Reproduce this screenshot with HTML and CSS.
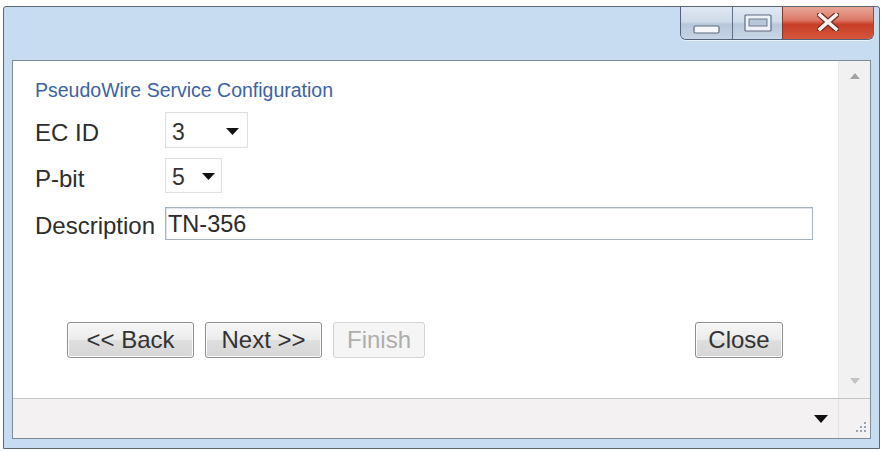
FILE: index.html
```html
<!DOCTYPE html>
<html>
<head>
<meta charset="utf-8">
<link rel="stylesheet" href="styles.css">
</head>
<body>
<div class="window">
  <div class="titlebar">
    <div class="caption-buttons">
      <div class="cb cb-min">
        <svg width="27" height="9" viewBox="0 0 27 9"><rect x="1" y="1" width="25" height="7" rx="1.5" fill="#f4f7fb" stroke="#5d6b7d" stroke-width="1.2"/></svg>
      </div>
      <div class="cb cb-max">
        <svg width="28" height="18" viewBox="0 0 28 18"><rect x="1" y="1" width="26" height="16" rx="1" fill="#eef3f9" stroke="#5d6b7d" stroke-width="1.2"/><rect x="5" y="5" width="18" height="7" fill="#b7c6d8" stroke="#6c7a8c" stroke-width="1"/></svg>
      </div>
      <div class="cb cb-close">
        <svg width="22" height="18" viewBox="0 0 22 18"><path d="M3 2 L19 16 M19 2 L3 16" stroke="#6b2a20" stroke-width="6" stroke-linecap="square"/><path d="M3 2 L19 16 M19 2 L3 16" stroke="#f7f1ef" stroke-width="3.6" stroke-linecap="square"/></svg>
      </div>
    </div>
  </div>
  <div class="panel">
    <div class="main">
      <div class="content">
        <div class="heading">PseudoWire Service Configuration</div>
        <div class="row row-ec">
          <div class="label">EC ID</div>
          <div class="select select-ec"><span class="val">3</span>
            <svg class="caret" width="13" height="7" viewBox="0 0 13 7"><polygon points="0,0 13,0 6.5,7" fill="#111"/></svg>
          </div>
        </div>
        <div class="row row-pbit">
          <div class="label">P-bit</div>
          <div class="select select-pbit"><span class="val">5</span>
            <svg class="caret" width="13" height="7" viewBox="0 0 13 7"><polygon points="0,0 13,0 6.5,7" fill="#111"/></svg>
          </div>
        </div>
        <div class="row row-desc">
          <div class="label">Description</div>
          <div class="textbox">TN-356</div>
        </div>
        <div class="buttons">
          <div class="btn-group">
            <div class="btn btn-back">&lt;&lt; Back</div>
            <div class="btn btn-next">Next &gt;&gt;</div>
            <div class="btn btn-finish disabled">Finish</div>
          </div>
          <div class="btn btn-close">Close</div>
        </div>
      </div>
      <div class="scrollbar">
        <svg width="10" height="6" viewBox="0 0 10 6"><polygon points="5,0 10,6 0,6" fill="#a3a3a3"/></svg>
        <svg width="10" height="6" viewBox="0 0 10 6"><polygon points="0,0 10,0 5,6" fill="#c2c2c2"/></svg>
      </div>
    </div>
    <div class="statusbar">
      <div class="status-main">
        <svg width="14" height="8" viewBox="0 0 14 8"><polygon points="0,0 14,0 7,8" fill="#111"/></svg>
      </div>
      <div class="status-corner">
        <svg width="16" height="16" viewBox="0 0 16 16" fill="#9aa3ad">
          <rect x="12" y="2" width="2" height="2"/>
          <rect x="8" y="6" width="2" height="2"/><rect x="12" y="6" width="2" height="2"/>
          <rect x="4" y="10" width="2" height="2"/><rect x="8" y="10" width="2" height="2"/><rect x="12" y="10" width="2" height="2"/>
        </svg>
      </div>
    </div>
  </div>
</div>
</body>
</html>
```

FILE: styles.css
```css
* { box-sizing: border-box; }
html, body { margin: 0; padding: 0; background: #ffffff; }
body {
  width: 882px;
  height: 451px;
  overflow: hidden;
  font-family: "Liberation Sans", Arial, sans-serif;
  color: #2e2e2e;
}
.window {
  margin: 6px 0 0 3px;
  width: 877px;
  height: 443px;
  border: 1px solid #5d6773;
  border-radius: 3px 3px 0 0;
  background: #c7dbf1;
  display: flex;
  flex-direction: column;
}
.titlebar {
  height: 53px;
  display: flex;
  justify-content: flex-end;
  align-items: flex-start;
  padding-right: 5px;
  flex: none;
}
.caption-buttons {
  display: flex;
  height: 33px;
  border: 1px solid #53627a;
  border-top: none;
  border-radius: 0 0 6px 6px;
  overflow: hidden;
  box-shadow: 0 1px 0 rgba(255,255,255,0.6);
}
.cb {
  height: 100%;
  display: flex;
  justify-content: center;
}
.cb-min {
  width: 52px;
  align-items: flex-end;
  padding-bottom: 5px;
  border-right: 1px solid #5f6f86;
  background: linear-gradient(#dfe8f3, #cfdbe9 45%, #b7c7da 55%, #c6d4e4);
}
.cb-max {
  width: 50px;
  align-items: flex-start;
  padding-top: 7px;
  border-right: 1px solid #7a3a30;
  background: linear-gradient(#e0e9f3, #d0dcea 45%, #b9c9dc 55%, #c8d6e6);
}
.cb-close {
  width: 90px;
  align-items: flex-start;
  padding-top: 6px;
  background: linear-gradient(#e8a698, #dc7a68 40%, #c93d27 55%, #d4573c);
}
.panel {
  margin: 0 8px 9px 8px;
  flex: 1;
  border: 1px solid #7e8a97;
  background: #ffffff;
  display: flex;
  flex-direction: column;
}
.main {
  flex: 1;
  display: flex;
  min-height: 0;
}
.content {
  flex: 1;
  padding: 18px 0 0 22px;
  display: flex;
  flex-direction: column;
}
.heading {
  font-size: 19.5px;
  line-height: 22px;
  color: #3b62a3;
  margin-bottom: 11px;
}
.row {
  display: flex;
  align-items: center;
}
.label {
  width: 130px;
  font-size: 24px;
  line-height: 28px;
  padding-top: 6px;
  color: #2d2d2d;
  white-space: nowrap;
}
.row-ec { height: 36px; }
.row-pbit { height: 35px; margin-top: 10px; }
.row-desc { height: 33px; margin-top: 14px; }
.row-desc .label { padding-top: 4px; }
.select {
  height: 100%;
  border: 1px solid #e0e0e0;
  box-shadow: inset 0 0 2px rgba(0,0,0,0.06);
  display: flex;
  align-items: center;
  justify-content: space-between;
  padding: 4px 8px 0 6px;
  font-size: 23px;
  color: #333;
}
.select-ec { width: 83px; }
.select-pbit { width: 57px; padding-right: 6px; }
.select .caret { margin-top: -2px; }
.textbox {
  width: 648px;
  height: 100%;
  border: 1px solid #a7b3bf;
  box-shadow: inset 1px 1px 0 #dfe4ea;
  font-size: 23.5px;
  line-height: 28px;
  padding: 2px 0 0 2px;
  color: #2b2b2b;
}
.buttons {
  margin-top: 82px;
  padding: 0 55px 0 32px;
  display: flex;
  justify-content: space-between;
}
.btn-group {
  display: flex;
  gap: 11px;
}
.btn {
  height: 36px;
  border: 1px solid #8e8e8e;
  border-radius: 3px;
  background: linear-gradient(#f6f6f6, #ececec 48%, #dedede 52%, #d6d6d6);
  box-shadow: inset 0 0 0 1px #fbfbfb;
  font-size: 24px;
  line-height: 33px;
  text-align: center;
  color: #333;
}
.btn-back { width: 127px; }
.btn-next { width: 117px; }
.btn-finish { width: 92px; }
.btn-close { width: 88px; }
.btn.disabled {
  border-color: #d3d3d3;
  background: #f5f5f5;
  color: #aeaeae;
  box-shadow: none;
}
.scrollbar {
  width: 32px;
  flex: none;
  background: #f1f1f1;
  border-left: 1px solid #e6e6e6;
  display: flex;
  flex-direction: column;
  justify-content: space-between;
  align-items: center;
  padding: 12px 0 14px 0;
}
.statusbar {
  height: 40px;
  flex: none;
  border-top: 1px solid #c4c4c4;
  background: #f3f1f1;
  display: flex;
}
.status-main {
  flex: 1;
  display: flex;
  justify-content: flex-end;
  align-items: center;
  padding-right: 10px;
}
.status-corner {
  width: 32px;
  border-left: 1px solid #e4e2e2;
  display: flex;
  justify-content: flex-end;
  align-items: flex-end;
  padding: 0 2px 2px 0;
}
```
